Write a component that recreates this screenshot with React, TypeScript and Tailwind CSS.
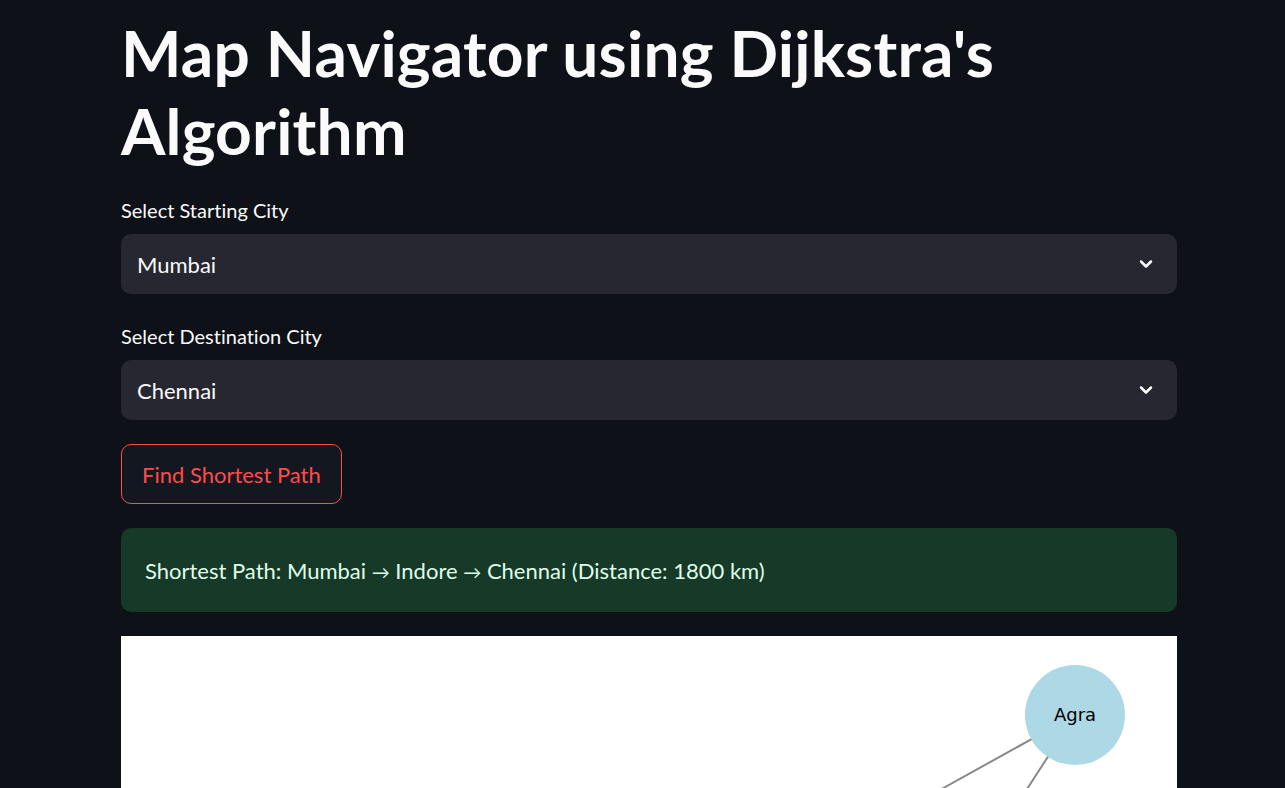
import React from "react";

const font = { fontFamily: "Lato, 'Noto Sans', sans-serif" };

const Chevron = () => (
  <svg width="20" height="20" viewBox="0 0 24 24" fill="none" stroke="white" strokeWidth="3" strokeLinecap="round" strokeLinejoin="round">
    <path d="M6 9l6 6 6-6" />
  </svg>
);

const SelectBox = ({ label, value }: { label: string; value: string }) => (
  <div className="flex flex-col">
    <p className="text-[20px] leading-[28px] text-[#fafafa] mb-[10px]">{label}</p>
    <div className="flex items-center justify-between h-[60px] rounded-[10px] bg-[#262730] pl-[16px] pr-[21px]">
      <span className="text-[22px] text-[#fafafa]">{value}</span>
      <Chevron />
    </div>
  </div>
);

const Graph = () => (
  <svg width="1056" height="600" viewBox="0 0 1056 600">
    <line x1="954" y1="79" x2="790" y2="170" stroke="#888" strokeWidth="2" />
    <line x1="954" y1="79" x2="895" y2="170" stroke="#888" strokeWidth="2" />
    <circle cx="954" cy="79" r="50" fill="#add8e6" />
    <text x="954" y="85" textAnchor="middle" fontSize="18" fill="#000" style={{ fontFamily: "'DejaVu Sans', sans-serif" }}>
      Agra
    </text>
  </svg>
);

export default function App() {
  return (
    <div className="min-h-screen bg-[#0e1117] [font-variant-ligatures:none]" style={font}>
      <div className="w-[1056px] ml-[121px] flex flex-col pt-[14px]">
        <h1 className="text-[64px] leading-[78px] font-bold text-[#fafafa] mb-[26px] tracking-[0.2px]">
          Map Navigator using Dijkstra's Algorithm
        </h1>
        <SelectBox label="Select Starting City" value="Mumbai" />
        <div className="h-[28px]" />
        <SelectBox label="Select Destination City" value="Chennai" />
        <div className="h-[24px]" />
        <div>
          <button className="h-[60px] px-[20px] rounded-[10px] border border-[#ff4b4b] bg-[#131720] text-[22px] text-[#ff4b4b]">
            Find Shortest Path
          </button>
        </div>
        <div className="mt-[24px] h-[84px] rounded-[10px] bg-[#173928] flex items-center px-[24px]">
          <span className="text-[22px] text-[#dffde9]">
            Shortest Path: Mumbai <span className="text-[18px]">→</span> Indore <span className="text-[18px]">→</span> Chennai (Distance: 1800 km)
          </span>
        </div>
        <div className="mt-[24px] bg-white">
          <Graph />
        </div>
      </div>
    </div>
  );
}
